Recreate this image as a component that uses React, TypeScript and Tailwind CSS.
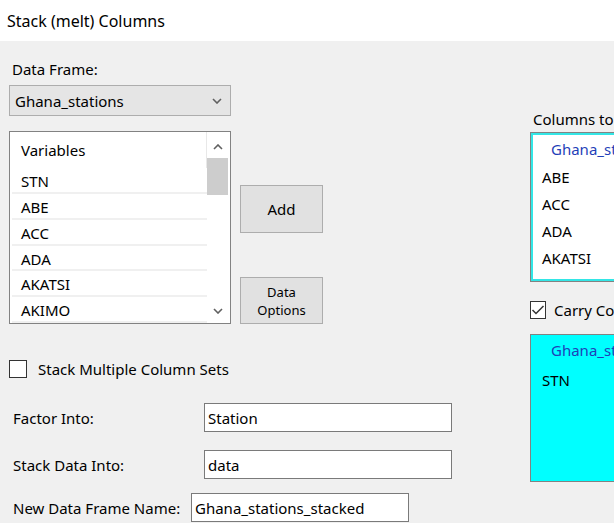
import React from 'react';

const font = { fontFamily: '"Segoe UI", "Noto Sans", "Liberation Sans", sans-serif' };

const variables = ['STN', 'ABE', 'ACC', 'ADA', 'AKATSI', 'AKIMO'];
const selected = ['ABE', 'ACC', 'ADA', 'AKATSI'];

const Chevron: React.FC<{ up?: boolean; className?: string }> = ({ up, className }) => (
  <svg width="10" height="6" viewBox="0 0 10 6" className={className}>
    <polyline
      points={up ? '1,5 5,1 9,5' : '1,1 5,5 9,1'}
      fill="none"
      stroke="#606060"
      strokeWidth="1.6"
    />
  </svg>
);

const TextBox: React.FC<{ value: string; className: string }> = ({ value, className }) => (
  <div className={`h-[29px] border border-[#7a7a7a] bg-white flex items-center pl-[3px] ${className}`}>
    {value}
  </div>
);

const App: React.FC = () => {
  return (
    <div style={font} className="w-[614px] h-[523px] overflow-hidden bg-[#f0f0f0] text-[15px] text-black leading-[20px]">
      <div className="h-[41px] bg-white flex items-center pl-[7px] text-[16px]">Stack (melt) Columns</div>

      <div className="flex">
        {/* left column */}
        <div className="w-[530px] shrink-0 pl-[9px]">
          <div className="mt-[18px] pl-[3px]">Data Frame:</div>
          <div className="mt-[6px] h-[31px] w-[222px] border border-[#adadad] bg-[#e5e5e5] flex items-center justify-between pl-[5px] pr-[8px]">
            <span>Ghana_stations</span>
            <Chevron />
          </div>

          <div className="flex mt-[15px]">
            <div className="w-[222px] h-[193px] border border-[#828282] bg-white flex">
              <div className="flex-1 flex flex-col pl-[2px]">
                <div className="h-[38px] flex items-center pl-[9px] border-r border-[#e8e8e8]">Variables</div>
                {variables.map((v) => (
                  <div key={v} className="h-[25.8px] shrink-0 flex items-center pl-[9px] pt-[2px] border-b-2 border-[#f0f0f0]">
                    {v}
                  </div>
                ))}
              </div>
              <div className="w-[23px] flex flex-col items-center pr-[2px]">
                <div className="h-[26px] flex items-center justify-center pt-[4px]">
                  <Chevron up />
                </div>
                <div className="w-[21px] h-[37px] bg-[#cdcdcd]" />
                <div className="flex-1" />
                <div className="h-[24px] flex items-center justify-center">
                  <Chevron />
                </div>
              </div>
            </div>

            <div className="ml-[9px] flex flex-col justify-between">
              <div className="mt-[54px] w-[83px] h-[48px] border border-[#adadad] bg-[#e1e1e1] flex items-center justify-center">
                Add
              </div>
              <div className="w-[83px] h-[47px] border border-[#adadad] bg-[#e1e1e1] flex items-center justify-center text-center text-[13px] leading-[18px]">
                Data
                <br />
                Options
              </div>
            </div>
          </div>

          <div className="mt-[35px] flex items-center">
            <div className="w-[18px] h-[18px] border border-[#333] bg-white" />
            <span className="ml-[11px]">Stack Multiple Column Sets</span>
          </div>

          <div className="mt-[24px] flex items-center">
            <span className="w-[195px] pl-[4px]">Factor Into:</span>
            <TextBox value="Station" className="w-[248px]" />
          </div>
          <div className="mt-[18px] flex items-center">
            <span className="w-[195px] pl-[4px]">Stack Data Into:</span>
            <TextBox value="data" className="w-[248px]" />
          </div>
          <div className="mt-[14px] flex items-center">
            <span className="w-[182px] pl-[4px]">New Data Frame Name:</span>
            <TextBox value="Ghana_stations_stacked" className="w-[218px]" />
          </div>
        </div>

        {/* right column */}
        <div className="flex-1 min-w-0">
          <div className="mt-[68px] pl-[3px] whitespace-nowrap">Columns to Stack:</div>
          <div className="mt-[3px] w-[200px] h-[150px] border border-[#828282] bg-white">
            <div className="h-full border-2 border-[#33e6e6] pt-[4px]">
              <div className="pl-[18px] text-[#1f3fb8] h-[24px]">Ghana_stations</div>
              {selected.map((v) => (
                <div key={v} className="pl-[9px] h-[27px] pt-[1px] flex items-center">
                  {v}
                </div>
              ))}
            </div>
          </div>

          <div className="mt-[18px] flex items-center">
            <div className="w-[18px] h-[18px] border border-[#333] bg-white flex items-center justify-center">
              <svg width="14" height="12" viewBox="0 0 14 12">
                <polyline points="1.5,6 5,9.5 12.5,2" fill="none" stroke="#333" strokeWidth="1.5" />
              </svg>
            </div>
            <span className="ml-[8px] whitespace-nowrap">Carry Columns:</span>
          </div>

          <div className="mt-[14px] w-[200px] h-[148px] border border-[#828282] bg-[#00ffff]">
            <div className="pt-[5px] pl-[20px] text-[#1f3fb8]">Ghana_stations</div>
            <div className="pt-[10px] pl-[11px]">STN</div>
          </div>
        </div>
      </div>
    </div>
  );
};

export default App;
